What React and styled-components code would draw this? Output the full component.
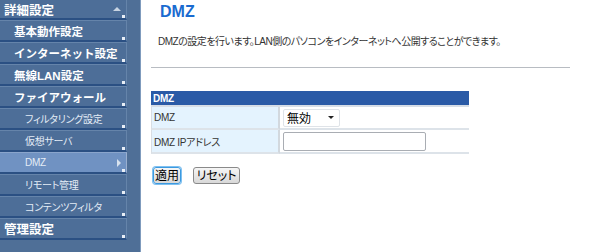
import React from "react";
import styled, { createGlobalStyle } from "styled-components";

const Global = createGlobalStyle`
  html, body { margin: 0; padding: 0; background: #fff; }
  body { font-family: "Liberation Sans", "Noto Sans CJK JP", sans-serif; height: 252px; overflow: hidden; }
`;

const Page = styled.div`
  display: flex;
  height: 252px;
`;

const Sidebar = styled.nav`
  width: 140px;
  flex: none;
  background: #4f6f97;
  border-right: 1px solid #7f9bbd;
  display: flex;
  flex-direction: column;
`;

const sizes = { 0: 12.5, 1: 11.5, 2: 10 };

const Item = styled.div`
  position: relative;
  box-sizing: border-box;
  width: 127px;
  height: ${p => (p.$first ? 20 : 22)}px;
  display: flex;
  align-items: center;
  white-space: nowrap;
  padding-left: ${p => (p.$level === 0 ? 4 : p.$level === 1 ? 14 : 25)}px;
  color: ${p => (p.$level === 2 ? "#e4ecf6" : "#ffffff")};
  font-size: ${p => sizes[p.$level]}px;
  font-weight: ${p => (p.$level === 2 ? 400 : 700)};
  font-feature-settings: ${p => (p.$level === 2 ? '"palt"' : "normal")};
  letter-spacing: ${p => (p.$level === 2 ? -0.3 : 0)}px;
  background: ${p => (p.$active ? "#7092c2" : "#4d6e98")};
  border-top: ${p => (p.$first ? 0 : 1)}px solid ${p => (p.$active ? "#8aa5cc" : "#6584aa")};
  border-right: 1px solid ${p => (p.$active ? "#9ab0d0" : "#6584aa")};
  border-bottom: 2px solid #2b5083;
  &::after {
    content: "";
    position: absolute;
    right: 1px;
    bottom: 0;
    width: 3px;
    height: 3px;
    background: #e8eef6;
  }
`;

const Arrow = styled.span`
  position: absolute;
  right: 5px;
  top: 50%;
  transform: translateY(-50%);
  width: 0;
  height: 0;
  ${p => p.$up
    ? `border-left: 4px solid transparent; border-right: 4px solid transparent; border-bottom: 4px solid #c8d4e2;`
    : `border-top: 4px solid transparent; border-bottom: 4px solid transparent; border-left: 4px solid #d8e2ee;`}
`;

const Main = styled.main`
  flex: 1;
  padding: 0 0 0 10px;
  display: flex;
  flex-direction: column;
  font-feature-settings: "palt";
`;

const Title = styled.h1`
  margin: 3px 0 0 9px;
  font-size: 16px;
  font-weight: 700;
  color: #1a6bd0;
  line-height: 18px;
`;

const Desc = styled.p`
  margin: 14px 0 0 7px;
  font-size: 10px;
  letter-spacing: -0.5px;
  color: #333;
  line-height: 14px;
  white-space: nowrap;
`;

const Rule = styled.hr`
  margin: 18px 0 0 0;
  width: 419px;
  border: 0;
  border-top: 1px solid #b8bcc2;
  height: 0;
`;

const Table = styled.table`
  margin-top: 23px;
  width: 318px;
  border-collapse: separate;
  border-spacing: 0;
  font-size: 10px;
  letter-spacing: -0.3px;
  color: #333;
`;

const Head = styled.th`
  background: #2a5aa6;
  color: #fff;
  font-size: 10px;
  font-weight: 700;
  text-align: left;
  height: 14px;
  padding: 0 2px;
  border-bottom: 2px solid #d6dde6;
`;

const Label = styled.td`
  background: #e4f3fe;
  width: 122px;
  height: ${p => p.$h}px;
  padding: 0 2px;
  white-space: nowrap;
  border-left: 1px solid #d8dee4;
  border-bottom: 2px solid #dde3e9;
  border-right: 2px solid #d2d8de;
`;

const Value = styled.td`
  background: #fff;
  padding: 0 3px;
  border-bottom: 2px solid #dde3e9;
`;

const Select = styled.div`
  box-sizing: border-box;
  width: 57px;
  height: 18px;
  border: 1px solid #dfe3e8;
  border-radius: 2px;
  display: flex;
  align-items: center;
  justify-content: space-between;
  padding: 0 5px 0 3px;
  font-size: 12px;
  letter-spacing: 0;
  color: #000;
`;

const Caret = styled.span`
  width: 0;
  height: 0;
  border-left: 3px solid transparent;
  border-right: 3px solid transparent;
  border-top: 3px solid #222;
`;

const Input = styled.div`
  box-sizing: border-box;
  width: 143px;
  height: 19px;
  border: 1px solid #a9adb3;
  border-radius: 2px;
  background: #fff;
`;

const Buttons = styled.div`
  display: flex;
  gap: 12px;
  margin: 13px 0 0 2px;
`;

const Button = styled.button`
  box-sizing: border-box;
  height: 17px;
  padding: 0 1px;
  font-family: "Liberation Sans", "Noto Sans CJK JP", sans-serif;
  font-feature-settings: "palt";
  font-size: 12px;
  line-height: 14px;
  color: #000;
  background: linear-gradient(#f6f6f6, #d8d8d8);
  border: 1px solid ${p => (p.$focus ? "#3c9ae0" : "#8a8a8a")};
  border-radius: 3px;
  box-shadow: ${p => (p.$focus ? "0 0 0 1px #7fc0f0" : "none")};
  width: ${p => p.$w}px;
`;

const menu = [
  { label: "詳細設定", level: 0, up: true },
  { label: "基本動作設定", level: 1 },
  { label: "インターネット設定", level: 1 },
  { label: "無線LAN設定", level: 1 },
  { label: "ファイアウォール", level: 1 },
  { label: "フィルタリング設定", level: 2 },
  { label: "仮想サーバ", level: 2 },
  { label: "DMZ", level: 2, active: true },
  { label: "リモート管理", level: 2 },
  { label: "コンテンツフィルタ", level: 2 },
  { label: "管理設定", level: 0 },
];

export default function App() {
  return (
    <Page>
      <Global />
      <Sidebar>
        {menu.map((m, i) => (
          <Item key={m.label} $first={i === 0} $level={m.level} $active={m.active}>
            {m.label}
            {m.up && <Arrow $up />}
            {m.active && <Arrow />}
          </Item>
        ))}
      </Sidebar>
      <Main>
        <Title>DMZ</Title>
        <Desc>DMZの設定を行います。LAN側のパソコンをインターネットへ公開することができます。</Desc>
        <Rule />
        <Table>
          <thead>
            <tr><Head colSpan={2}>DMZ</Head></tr>
          </thead>
          <tbody>
            <tr>
              <Label $h={21}>DMZ</Label>
              <Value><Select>無効<Caret /></Select></Value>
            </tr>
            <tr>
              <Label $h={22}>DMZ IPアドレス</Label>
              <Value><Input /></Value>
            </tr>
          </tbody>
        </Table>
        <Buttons>
          <Button $focus $w={28}>適用</Button>
          <Button $w={47}>リセット</Button>
        </Buttons>
      </Main>
    </Page>
  );
}
